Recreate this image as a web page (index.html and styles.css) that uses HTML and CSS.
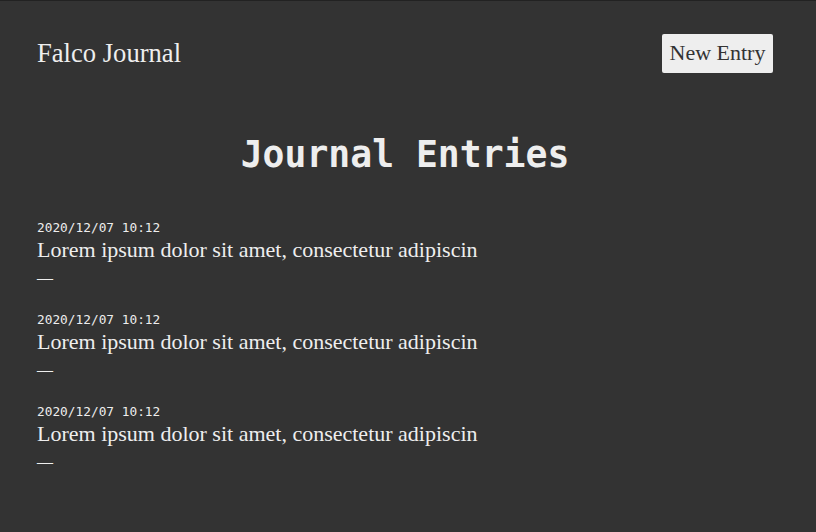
FILE: index.html
```html
<!DOCTYPE html>
<html>
<head>
<meta charset="utf-8">
<link rel="stylesheet" href="styles.css">
</head>
<body>
<div class="page">
  <header class="header">
    <div class="brand">Falco Journal</div>
    <button class="new-btn">New Entry</button>
  </header>
  <h1 class="title">Journal Entries</h1>
  <ul class="entries">
    <li class="entry">
      <div class="date">2020/12/07 10:12</div>
      <div class="text">Lorem ipsum dolor sit amet, consectetur adipiscin</div>
      <div class="dash">—</div>
    </li>
    <li class="entry">
      <div class="date">2020/12/07 10:12</div>
      <div class="text">Lorem ipsum dolor sit amet, consectetur adipiscin</div>
      <div class="dash">—</div>
    </li>
    <li class="entry">
      <div class="date">2020/12/07 10:12</div>
      <div class="text">Lorem ipsum dolor sit amet, consectetur adipiscin</div>
      <div class="dash">—</div>
    </li>
  </ul>
</div>
</body>
</html>
```
FILE: styles.css
```css
html, body {
  margin: 0;
  padding: 0;
  background: #333333;
  height: 100%;
}
body {
  border-top: 1px solid #222222;
  box-sizing: border-box;
  color: #eeeeee;
  font-family: "Liberation Serif", serif;
}
.page {
  padding: 0 43px 0 37px;
}
.header {
  display: flex;
  justify-content: space-between;
  align-items: center;
  height: 104px;
}
.brand {
  font-size: 26.6px;
}
.new-btn {
  font-family: "Liberation Serif", serif;
  font-size: 22px;
  background: #eeeeee;
  color: #333333;
  border: none;
  border-radius: 2px;
  width: 111px;
  height: 39px;
  padding: 0;
}
.title {
  font-family: "DejaVu Sans Mono", monospace;
  font-weight: bold;
  font-size: 36.4px;
  text-align: center;
  margin: 0;
  line-height: 100px;
  color: #eeeeee;
}
.entries {
  list-style: none;
  margin: 14px 0 0;
  padding: 0;
}
.entry {
  margin-bottom: 18px;
}
.date {
  font-family: "DejaVu Sans Mono", monospace;
  font-size: 12.8px;
  line-height: 18px;
}
.text {
  font-size: 22px;
  line-height: 26px;
}
.dash {
  font-size: 16px;
  line-height: 30px;
}
```
